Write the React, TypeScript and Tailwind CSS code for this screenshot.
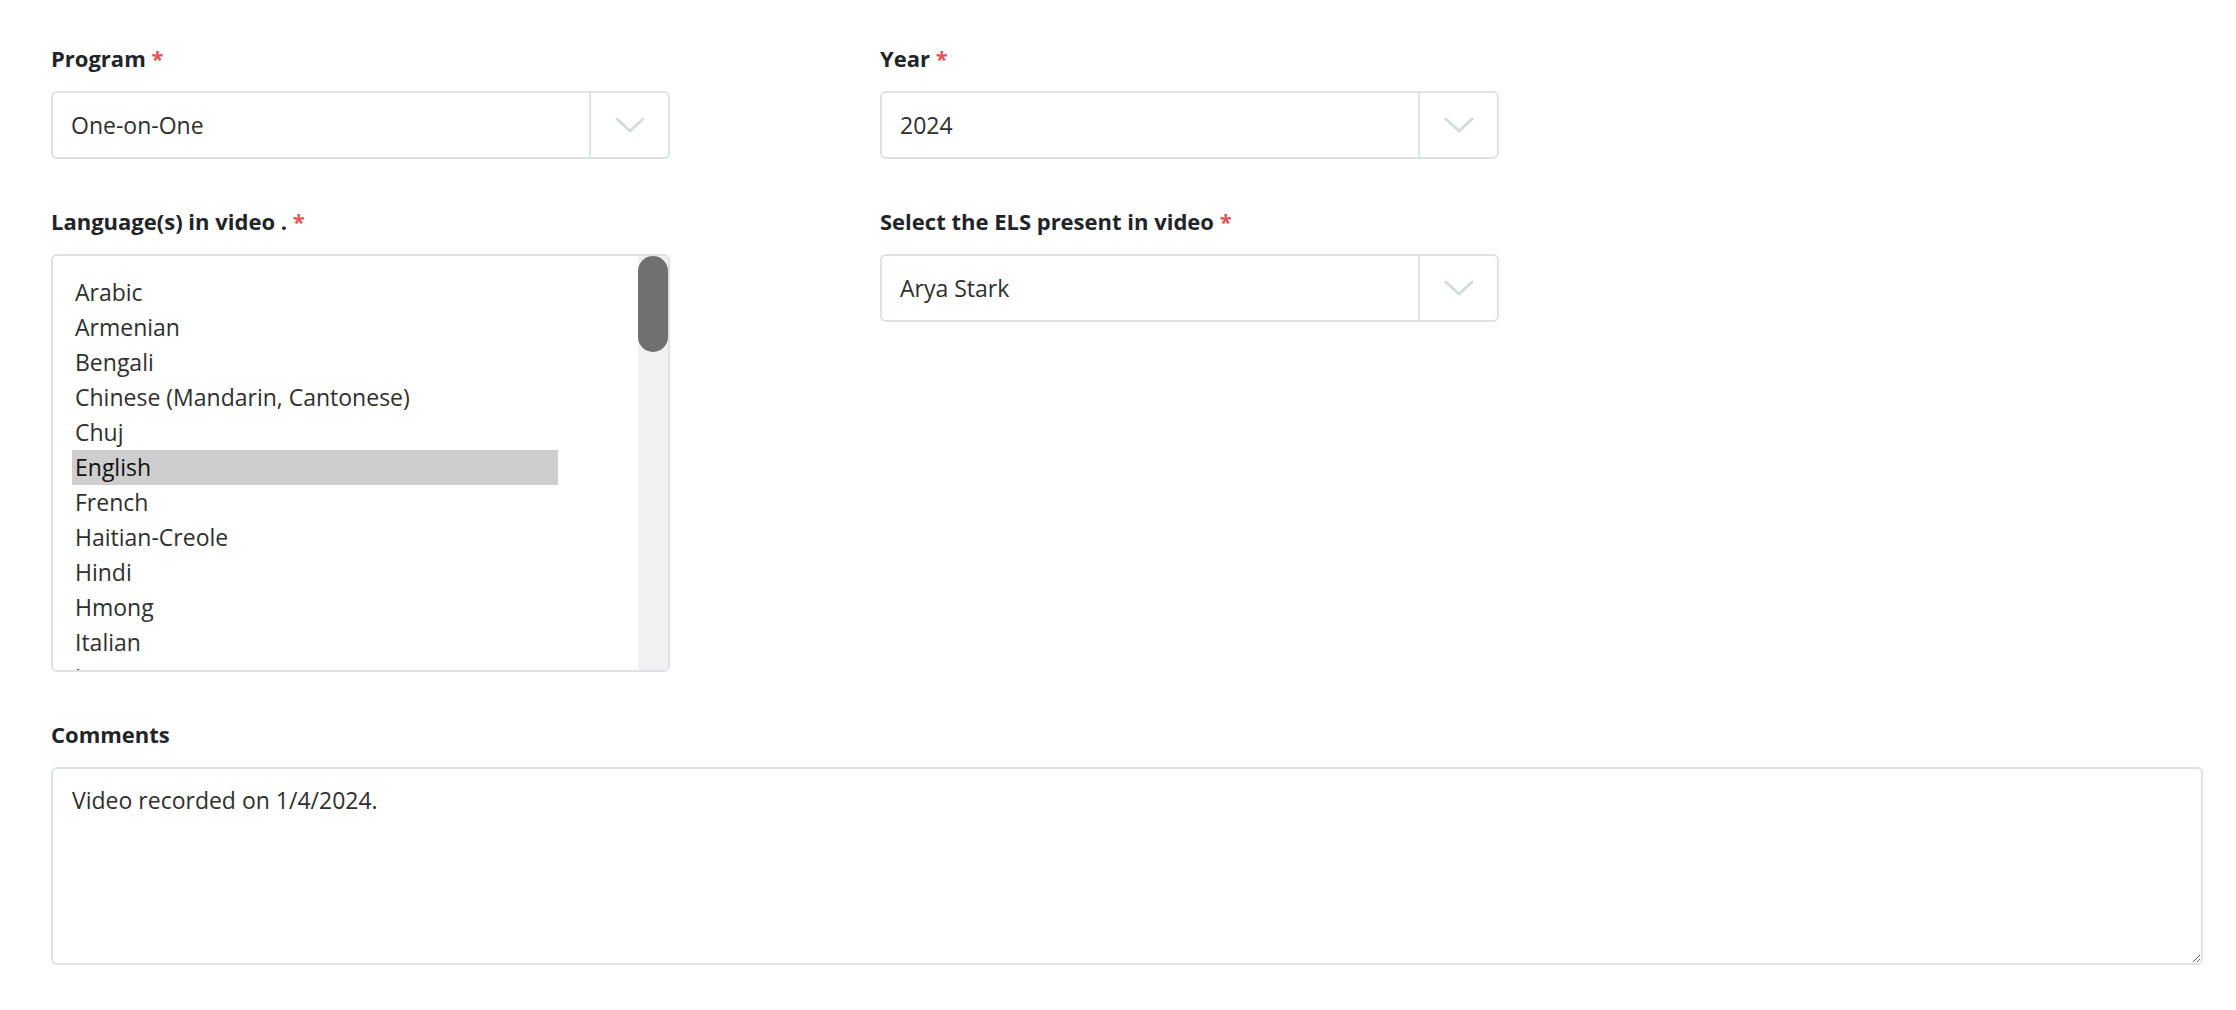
import React from 'react'

const languages = [
  'Arabic',
  'Armenian',
  'Bengali',
  'Chinese (Mandarin, Cantonese)',
  'Chuj',
  'English',
  'French',
  'Haitian-Creole',
  'Hindi',
  'Hmong',
  'Italian',
  'Japanese',
]

function FieldLabel({ children, required }: { children: React.ReactNode; required?: boolean }) {
  return (
    <label className="block text-[22px] leading-[30px] font-bold text-[#212529]">
      {children}
      {required && <span className="text-[#e55353]"> *</span>}
    </label>
  )
}

function Chevron() {
  return (
    <svg width="30" height="18" viewBox="0 0 30 18" fill="none">
      <path d="M2 3 L15 15 L28 3" stroke="#d5dadf" strokeWidth="3" strokeLinecap="round" strokeLinejoin="round" />
    </svg>
  )
}

function SelectBox({ value }: { value: string }) {
  return (
    <div className="mt-[18px] flex h-[68px] rounded-[6px] border-2 border-[#dee2e6] bg-white">
      <div className="flex flex-1 items-center pl-[18px] text-[23px] text-[#2f2f2f]">{value}</div>
      <div className="flex w-[79px] items-center justify-center border-l-2 border-[#dee2e6]">
        <Chevron />
      </div>
    </div>
  )
}

function LanguageList({ selected }: { selected: string }) {
  return (
    <div className="mt-[18px] flex h-[418px] overflow-hidden rounded-[6px] border-2 border-[#dee2e6] bg-white">
      <div className="h-full flex-1 overflow-hidden pl-[19px] pt-[19px]">
        {languages.map(lang => (
          <div
            key={lang}
            className={
              lang === selected
                ? 'h-[35px] w-[486px] pl-[3px] text-[23px] leading-[35px] text-[#111] bg-[#cecece]'
                : 'h-[35px] w-[486px] pl-[3px] text-[23px] leading-[35px] text-[#2f2f2f]'
            }
          >
            {lang}
          </div>
        ))}
      </div>
      {/* scroll track */}
      <div className="w-[30px] bg-[#f1f1f1]">
        <div className="h-[96px] rounded-full bg-[#707070]" />
      </div>
    </div>
  )
}

export default function App() {
  return (
    <div className="min-h-screen bg-white pl-[51px] pt-[43px] font-['Open_Sans',sans-serif]">
      <div className="grid grid-cols-[619px_619px] gap-x-[210px] gap-y-[47px]">
        <div>
          <FieldLabel required>Program</FieldLabel>
          <SelectBox value="One-on-One" />
        </div>
        <div>
          <FieldLabel required>Year</FieldLabel>
          <SelectBox value="2024" />
        </div>
        <div>
          <FieldLabel required>Language(s) in video .</FieldLabel>
          <LanguageList selected="English" />
        </div>
        <div>
          <FieldLabel required>Select the ELS present in video</FieldLabel>
          <SelectBox value="Arya Stark" />
        </div>
      </div>

      <div className="mt-[47px]">
        <FieldLabel>Comments</FieldLabel>
        <textarea
          defaultValue="Video recorded on 1/4/2024."
          className="mt-[18px] block h-[198px] w-[2152px] rounded-[6px] border-2 border-[#dee2e6] px-[19px] pt-[14px] text-[23px] leading-[35px] text-[#2f2f2f] outline-none"
        />
      </div>
    </div>
  )
}
